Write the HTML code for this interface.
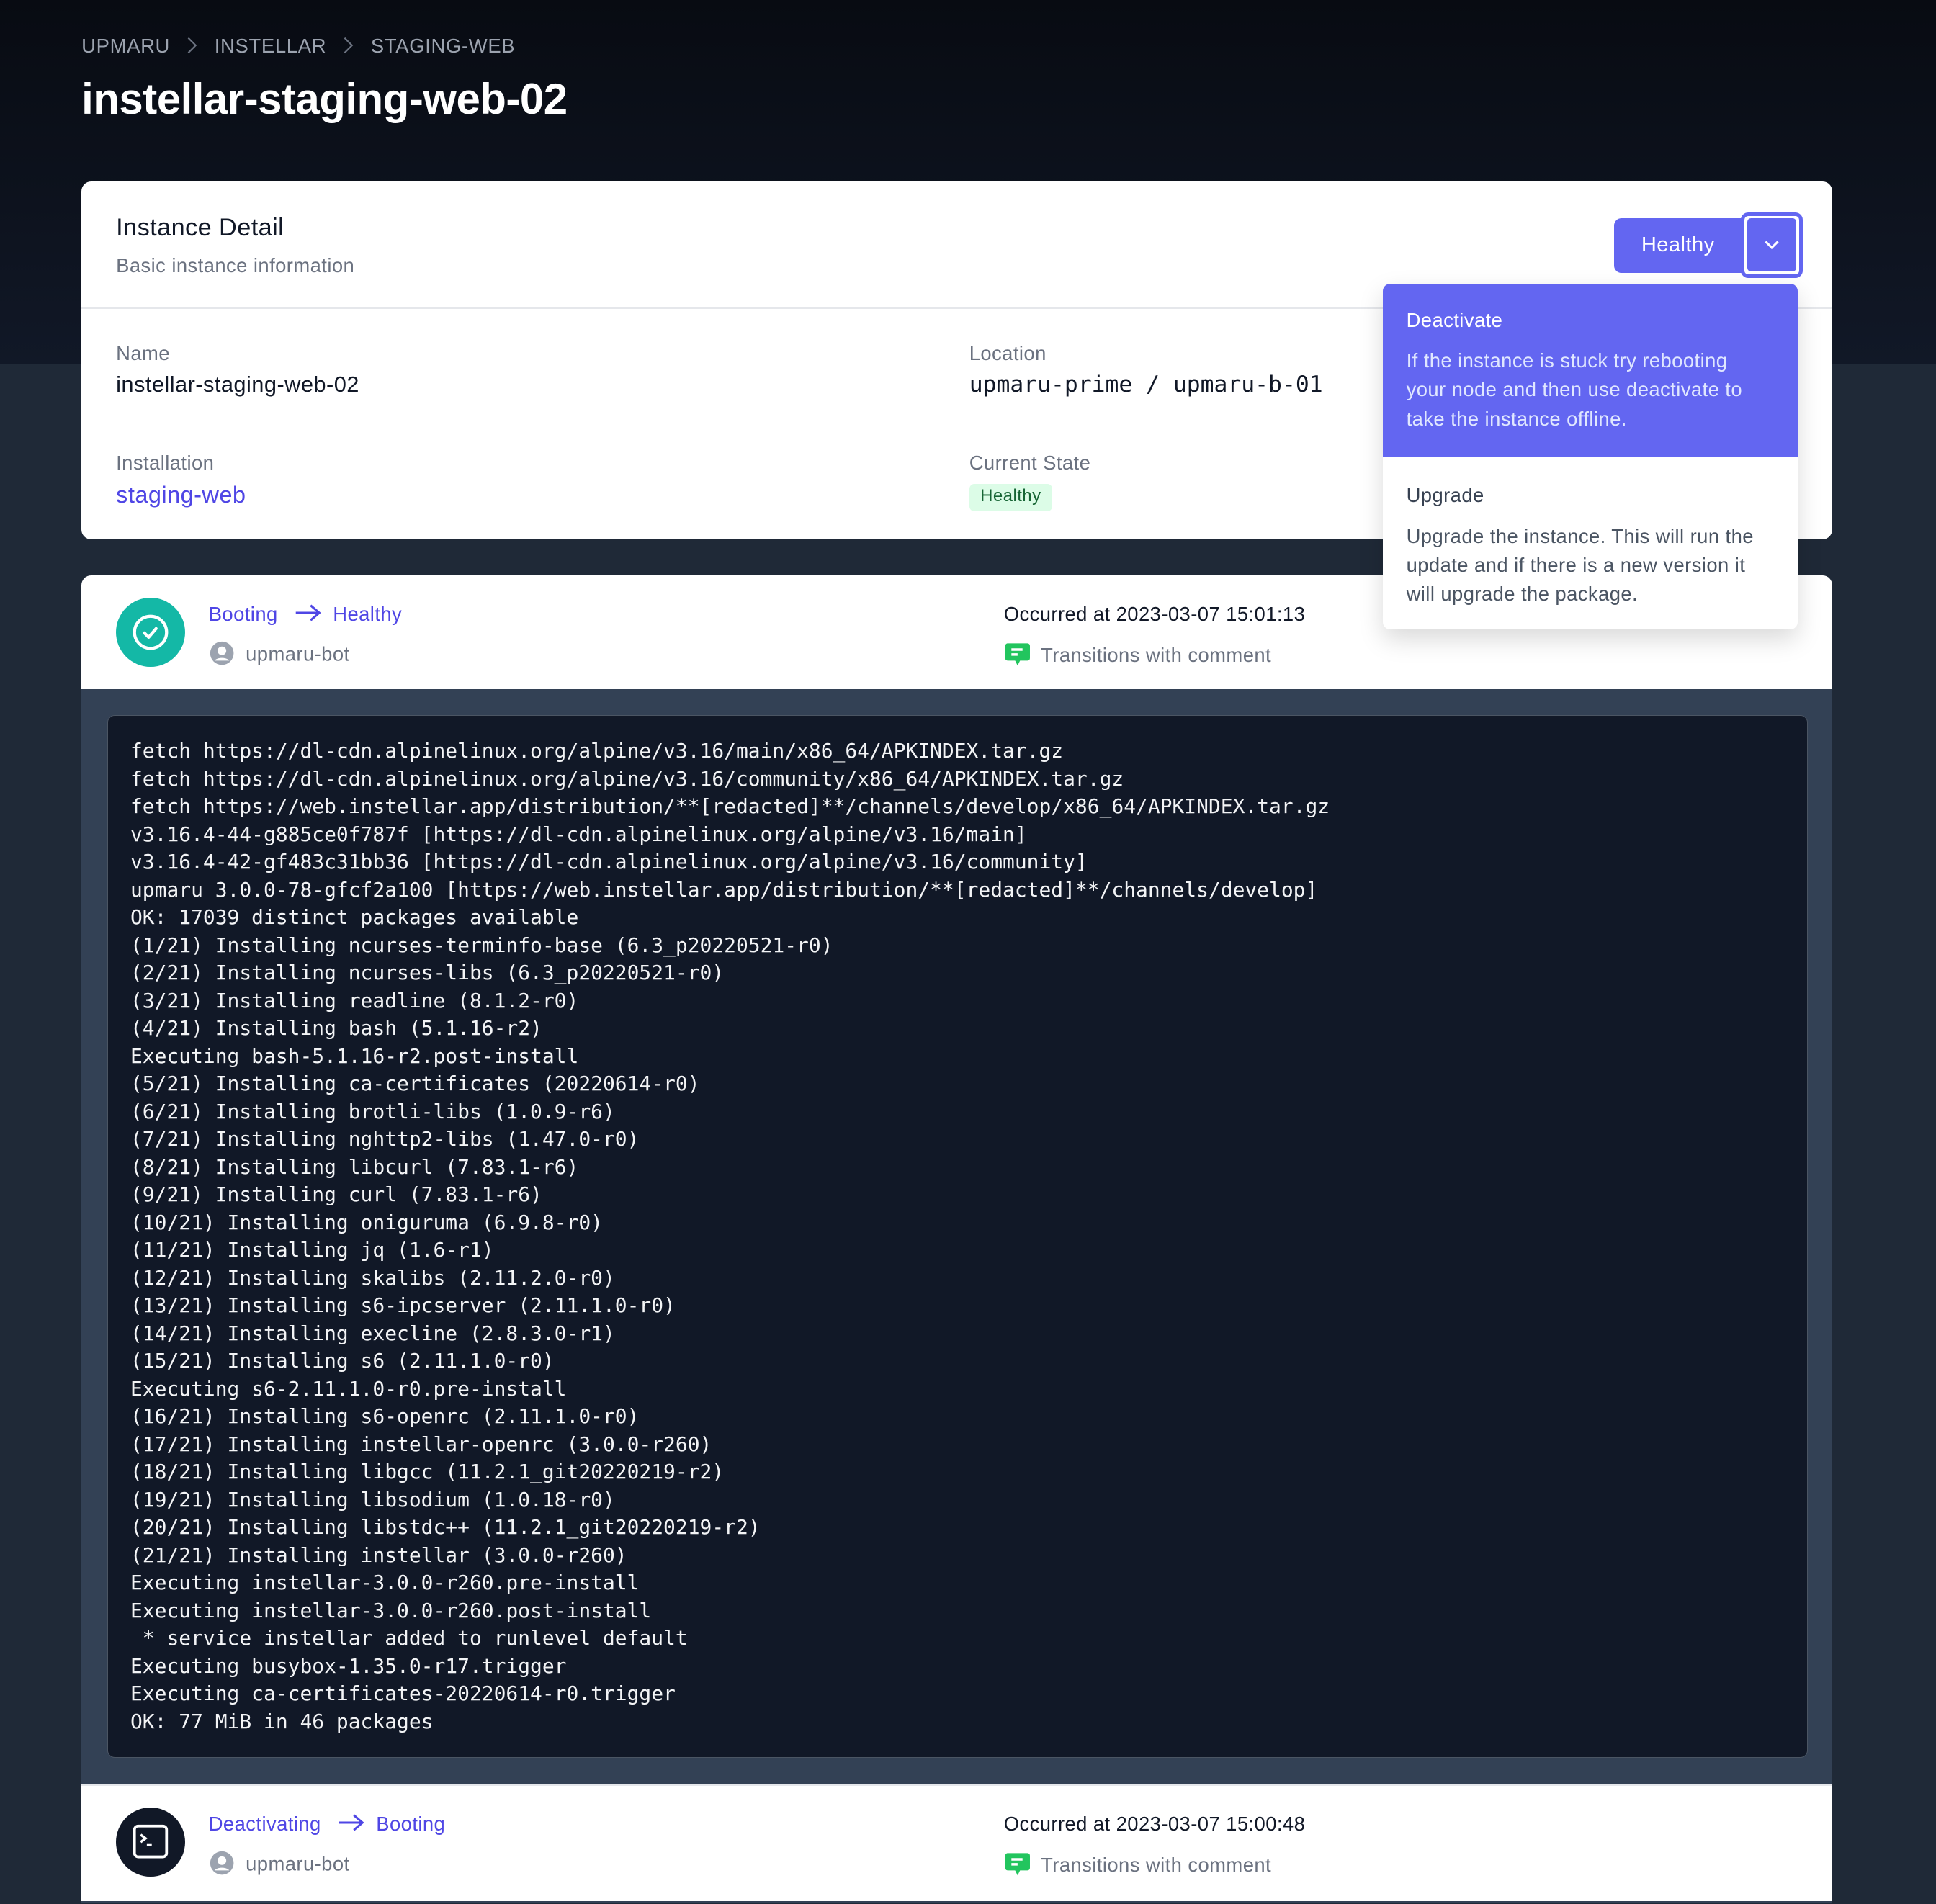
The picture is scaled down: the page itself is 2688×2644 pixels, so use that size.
<!DOCTYPE html>
<html><head><meta charset="utf-8"><style>
*{box-sizing:border-box;margin:0;padding:0}
html,body{width:2688px;height:2644px;overflow:hidden}
body{background:#1f2937;font-family:"Liberation Sans",sans-serif}
#z{zoom:1.71429;width:1568px;height:1542px;position:relative;overflow:hidden;background:#1f2937;letter-spacing:.25px}
.hdr{position:absolute;left:0;top:0;width:1568px;height:295px;background:linear-gradient(#080b12,#111827);border-bottom:1px solid #374151}
.bc{position:absolute;left:66px;top:28px;font-size:16px;color:#9ca3af;letter-spacing:.4px}
.bc svg{margin:0 13px;vertical-align:-1px}
h1{position:absolute;left:66px;top:60px;font-size:35px;color:#fff;font-weight:bold;letter-spacing:-.3px}
.abs{position:absolute}
.card{position:absolute;left:66px;width:1418px;background:#fff;border-radius:8px}
.lbl{font-size:16px;color:#6b7280}
.val{font-size:18px;color:#111827}
.mono{font-family:"DejaVu Sans Mono","Liberation Mono",monospace;letter-spacing:0}
pre{font-family:"DejaVu Sans Mono","Liberation Mono",monospace;font-size:16.3px;line-height:22.46px;color:#f3f4f6;letter-spacing:0}
.ind{color:#4f46e5;font-size:16px}
.gray{color:#6b7280;font-size:16px}
</style></head><body><div id="z">
<div class="hdr"></div>
<div class="bc">UPMARU<svg width="10" height="14" viewBox="0 0 10 14"><path d="M2 1l6 6-6 6" stroke="#6b7280" stroke-width="1.3" fill="none"/></svg>INSTELLAR<svg width="10" height="14" viewBox="0 0 10 14"><path d="M2 1l6 6-6 6" stroke="#6b7280" stroke-width="1.3" fill="none"/></svg>STAGING-WEB</div>
<h1>instellar-staging-web-02</h1>

<div class="card" style="top:147px;height:290px">
 <div class="abs" style="left:28px;top:26px;font-size:20px;color:#111827">Instance Detail</div>
 <div class="abs lbl" style="left:28px;top:59px">Basic instance information</div>
 <div class="abs" style="left:0;top:102px;width:1418px;height:1px;background:#e5e7eb"></div>
 <div class="abs lbl" style="left:28px;top:130px">Name</div>
 <div class="abs val" style="left:28px;top:154px">instellar-staging-web-02</div>
 <div class="abs lbl" style="left:28px;top:219px">Installation</div>
 <div class="abs" style="left:28px;top:243px;font-size:19px;color:#4f46e5">staging-web</div>
 <div class="abs lbl" style="left:719px;top:130px">Location</div>
 <div class="abs val mono" style="left:719px;top:154px;font-size:18.3px">upmaru-prime / upmaru-b-01</div>
 <div class="abs lbl" style="left:719px;top:219px">Current State</div>
 <div class="abs" style="left:719px;top:245px;background:#dcfce7;color:#166534;font-size:14px;padding:2px 9px;border-radius:4px;height:22px">Healthy</div>
 <div class="abs" style="left:1241px;top:30px;width:104px;height:44px;background:#6366f1;border-radius:6px 0 0 6px;color:#fff;font-size:17px;text-align:center;line-height:44px">Healthy</div>
 <div class="abs" style="left:1344px;top:25px;width:50px;height:53px;border:3px solid #6366f1;border-radius:6px;background:#fff;padding:2px"><div style="width:100%;height:100%;background:#6366f1;border-radius:3px;display:flex;align-items:center;justify-content:center"><svg width="14" height="10" viewBox="0 0 14 10"><path d="M2 2l5 5 5-5" stroke="#fff" stroke-width="1.8" fill="none"/></svg></div></div>
</div>

<div class="card" style="top:466px;height:1100px;border-radius:8px 8px 0 0;background:#334155;overflow:hidden">
 <div class="abs" style="left:0;top:0;width:1418px;height:92px;background:#fff"></div>
 <div class="abs" style="left:28px;top:18px;width:56px;height:56px;border-radius:50%;background:#14b8a6"><svg width="56" height="56" viewBox="0 0 56 56"><circle cx="28" cy="28" r="13" stroke="#fff" stroke-width="2.5" fill="none"/><path d="M23 28.5l3.5 3.5 6-7" stroke="#fff" stroke-width="2.5" fill="none" stroke-linecap="round" stroke-linejoin="round"/></svg></div>
 <div class="abs ind" style="left:103px;top:22px">Booting <svg width="22" height="14" viewBox="0 0 22 14" style="margin:0 9px;vertical-align:-1px"><path d="M1 7h19M13 1l7 6-7 6" stroke="#4f46e5" stroke-width="1.8" fill="none"/></svg>Healthy</div>
 <div class="abs gray" style="left:104px;top:53px"><svg width="20" height="20" viewBox="0 0 20 20" style="vertical-align:-4px;margin-right:9px"><circle cx="10" cy="10" r="9.5" fill="#9ca3af"/><circle cx="10" cy="8" r="3.5" fill="#fff"/><path d="M4 16c2-3 10-3 12 0" fill="#fff"/></svg>upmaru-bot</div>
 <div class="abs" style="left:747px;top:22px;font-size:16px;color:#111827">Occurred at 2023-03-07 15:01:13</div>
 <div class="abs gray" style="left:747px;top:53px"><svg width="22" height="22" viewBox="0 0 22 22" style="vertical-align:-5px;margin-right:8px"><path d="M3 2h16a2 2 0 0 1 2 2v10a2 2 0 0 1-2 2h-6l-2 4-2-4H3a2 2 0 0 1-2-2V4a2 2 0 0 1 2-2z" fill="#22c55e"/><path d="M6 7h9M6 11h5" stroke="#fff" stroke-width="2"/></svg>Transitions with comment</div>
 <div class="abs" style="left:21px;top:113px;width:1377px;height:845px;background:#111827;border:1px solid #4b5563;border-radius:6px">
<pre style="position:absolute;left:18px;top:18px">fetch https://dl-cdn.alpinelinux.org/alpine/v3.16/main/x86_64/APKINDEX.tar.gz
fetch https://dl-cdn.alpinelinux.org/alpine/v3.16/community/x86_64/APKINDEX.tar.gz
fetch https://web.instellar.app/distribution/**[redacted]**/channels/develop/x86_64/APKINDEX.tar.gz
v3.16.4-44-g885ce0f787f [https://dl-cdn.alpinelinux.org/alpine/v3.16/main]
v3.16.4-42-gf483c31bb36 [https://dl-cdn.alpinelinux.org/alpine/v3.16/community]
upmaru 3.0.0-78-gfcf2a100 [https://web.instellar.app/distribution/**[redacted]**/channels/develop]
OK: 17039 distinct packages available
(1/21) Installing ncurses-terminfo-base (6.3_p20220521-r0)
(2/21) Installing ncurses-libs (6.3_p20220521-r0)
(3/21) Installing readline (8.1.2-r0)
(4/21) Installing bash (5.1.16-r2)
Executing bash-5.1.16-r2.post-install
(5/21) Installing ca-certificates (20220614-r0)
(6/21) Installing brotli-libs (1.0.9-r6)
(7/21) Installing nghttp2-libs (1.47.0-r0)
(8/21) Installing libcurl (7.83.1-r6)
(9/21) Installing curl (7.83.1-r6)
(10/21) Installing oniguruma (6.9.8-r0)
(11/21) Installing jq (1.6-r1)
(12/21) Installing skalibs (2.11.2.0-r0)
(13/21) Installing s6-ipcserver (2.11.1.0-r0)
(14/21) Installing execline (2.8.3.0-r1)
(15/21) Installing s6 (2.11.1.0-r0)
Executing s6-2.11.1.0-r0.pre-install
(16/21) Installing s6-openrc (2.11.1.0-r0)
(17/21) Installing instellar-openrc (3.0.0-r260)
(18/21) Installing libgcc (11.2.1_git20220219-r2)
(19/21) Installing libsodium (1.0.18-r0)
(20/21) Installing libstdc++ (11.2.1_git20220219-r2)
(21/21) Installing instellar (3.0.0-r260)
Executing instellar-3.0.0-r260.pre-install
Executing instellar-3.0.0-r260.post-install
 * service instellar added to runlevel default
Executing busybox-1.35.0-r17.trigger
Executing ca-certificates-20220614-r0.trigger
OK: 77 MiB in 46 packages</pre>
 </div>
 <div class="abs" style="left:0;top:979px;width:1418px;height:95px;background:#fff;border-top:2px solid #e5e7eb"></div>
 <div class="abs" style="left:28px;top:998px;width:56px;height:56px;border-radius:50%;background:#111827"><svg width="56" height="56" viewBox="0 0 56 56"><rect x="15" y="15" width="26" height="25" rx="3" stroke="#fff" stroke-width="2.2" fill="none"/><path d="M20 22l4 3-4 3M25 30h4" stroke="#fff" stroke-width="2" fill="none"/></svg></div>
 <div class="abs ind" style="left:103px;top:1002px">Deactivating <svg width="22" height="14" viewBox="0 0 22 14" style="margin:0 9px;vertical-align:-1px"><path d="M1 7h19M13 1l7 6-7 6" stroke="#4f46e5" stroke-width="1.8" fill="none"/></svg>Booting</div>
 <div class="abs gray" style="left:104px;top:1033px"><svg width="20" height="20" viewBox="0 0 20 20" style="vertical-align:-4px;margin-right:9px"><circle cx="10" cy="10" r="9.5" fill="#9ca3af"/><circle cx="10" cy="8" r="3.5" fill="#fff"/><path d="M4 16c2-3 10-3 12 0" fill="#fff"/></svg>upmaru-bot</div>
 <div class="abs" style="left:747px;top:1002px;font-size:16px;color:#111827">Occurred at 2023-03-07 15:00:48</div>
 <div class="abs gray" style="left:747px;top:1033px"><svg width="22" height="22" viewBox="0 0 22 22" style="vertical-align:-5px;margin-right:8px"><path d="M3 2h16a2 2 0 0 1 2 2v10a2 2 0 0 1-2 2h-6l-2 4-2-4H3a2 2 0 0 1-2-2V4a2 2 0 0 1 2-2z" fill="#22c55e"/><path d="M6 7h9M6 11h5" stroke="#fff" stroke-width="2"/></svg>Transitions with comment</div>
</div>

<div class="abs" style="left:1120px;top:230px;width:336px;height:280px;background:#fff;border-radius:6px;box-shadow:0 8px 20px rgba(0,0,0,.15);overflow:hidden">
 <div style="background:#6366f1;height:140px;padding:20px 26px 20px 19px;color:#fff;font-size:16px">
  <div>Deactivate</div>
  <div style="margin-top:12px;line-height:23.5px;color:#e0e7ff">If the instance is stuck try rebooting your node and then use deactivate to take the instance offline.</div>
 </div>
 <div style="padding:22px 26px 20px 19px;color:#4b5563;font-size:16px">
  <div style="color:#374151">Upgrade</div>
  <div style="margin-top:12px;line-height:23.5px">Upgrade the instance. This will run the update and if there is a new version it will upgrade the package.</div>
 </div>
</div>
</div></body></html>
